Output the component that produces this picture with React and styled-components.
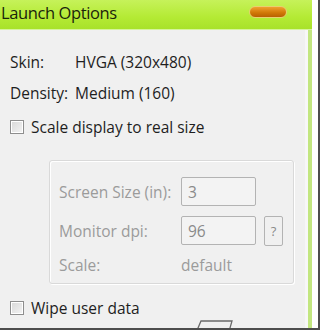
import React from 'react';
import styled, { createGlobalStyle } from 'styled-components';

const GlobalStyle = createGlobalStyle`
  html, body {
    margin: 0;
    padding: 0;
    background: #ffffff;
  }
  body {
    font-family: "Open Sans", "Noto Sans", sans-serif;
  }
`;

const Screen = styled.div`
  width: 323px;
  height: 334px;
  overflow: hidden;
  background: #ffffff;
`;

const Shadowed = styled.div`
  width: 318px;
  height: 328px;
  border-right: 2px solid #4d4d4d;
  border-bottom: 2px solid #4d4d4d;
  background: #ffffff;
  display: flex;
`;

const Window = styled.div`
  width: 312px;
  height: 328px;
  display: flex;
  flex-direction: column;
  background: #b9ec42;
  overflow: hidden;
`;

const TitleBar = styled.div`
  height: 29px;
  flex: none;
  display: flex;
  align-items: center;
  justify-content: space-between;
  padding: 0 25px 0 0;
  background: linear-gradient(180deg, #c6f25a 0%, #b4ea34 60%, #a8e22a 100%);
  border-bottom: 1px solid #d6f49c;
`;

const Title = styled.span`
  font-size: 16.5px;
  letter-spacing: -0.4px;
  color: #1a240c;
  margin-left: 1px;
  margin-top: -4px;
`;

const MinButton = styled.div`
  width: 36px;
  height: 10px;
  margin-top: -6px;
  border-radius: 6px;
  background: linear-gradient(180deg, #f0a030 0%, #d27a08 55%, #b86000 100%);
  border: 1px solid #e8d070;
`;

const Frame = styled.div`
  flex: 1;
  display: flex;
  background: #c2e680;
  padding-right: 4px;
  min-height: 0;
`;

const Body = styled.div`
  flex: 1;
  background: #f0f0f0;
  border-right: 3px solid #f7f7f7;
  padding: 16px 0 0 10px;
  display: flex;
  flex-direction: column;
  color: #1e1e1e;
  font-size: 15.5px;
  overflow: hidden;
`;

const InfoRow = styled.div`
  height: 31px;
  flex: none;
  display: flex;
  align-items: center;
`;

const InfoLabel = styled.span`
  width: 65px;
`;

const CheckRow = styled.label`
  height: 22px;
  flex: none;
  display: flex;
  align-items: center;
  gap: 7px;
  margin-top: ${(p) => p.$top || 0}px;
`;

const Box = styled.span`
  width: 12px;
  height: 12px;
  border: 1px solid #8e8e8e;
  background: linear-gradient(135deg, #d8d8d8 0%, #f4f4f4 100%);
  box-shadow: inset 0 0 0 1px #ffffff;
`;

const Group = styled.div`
  margin: 22px 0 0 39px;
  width: 245px;
  height: 124px;
  flex: none;
  box-sizing: border-box;
  border: 1px solid #d9d9d9;
  box-shadow: inset 1px 1px 0 #ffffff, 1px 1px 0 #ffffff;
  border-radius: 3px;
  padding: 16px 0 0 9px;
  display: flex;
  flex-direction: column;
  gap: 10px;
  color: #9b9b9b;
`;

const FieldRow = styled.div`
  display: flex;
  align-items: center;
  height: ${(p) => p.$h || 29}px;
  margin-top: ${(p) => p.$top || 0}px;
`;

const FieldLabel = styled.span`
  width: 122px;
`;

const Input = styled.div`
  width: 67px;
  height: 27px;
  border: 1px solid #b3b3b3;
  border-radius: 2px;
  background: #f3f3f3;
  padding-left: 6px;
  display: flex;
  align-items: center;
  color: #8a8a8a;
`;

const HelpButton = styled.div`
  width: 17px;
  height: 28px;
  margin-left: 8px;
  border: 1px solid #b3b3b3;
  border-radius: 2px;
  display: flex;
  align-items: center;
  justify-content: center;
  font-size: 13px;
  color: #8a8a8a;
`;

const Footer = styled.div`
  display: flex;
  padding-left: 183px;
  margin-top: 1px;
`;

const Sketch = () => (
  <svg width="42" height="16" viewBox="0 0 42 16">
    <polygon points="8,1 39,1 35,15 2,15" fill="none" stroke="#6a6a6a" strokeWidth="1.3" />
    <line x1="3" y1="14.5" x2="24" y2="14.5" stroke="#3a3a3a" strokeWidth="2" />
  </svg>
);

const App = () => (
  <Screen>
    <GlobalStyle />
    <Shadowed>
      <Window>
        <TitleBar>
          <Title>Launch Options</Title>
          <MinButton />
        </TitleBar>
        <Frame>
          <Body>
            <InfoRow>
              <InfoLabel>Skin:</InfoLabel>
              <span>HVGA (320x480)</span>
            </InfoRow>
            <InfoRow>
              <InfoLabel>Density:</InfoLabel>
              <span>Medium (160)</span>
            </InfoRow>
            <CheckRow $top={8}>
              <Box />
              <span>Scale display to real size</span>
            </CheckRow>
            <Group>
              <FieldRow>
                <FieldLabel>Screen Size (in):</FieldLabel>
                <Input>3</Input>
              </FieldRow>
              <FieldRow>
                <FieldLabel>Monitor dpi:</FieldLabel>
                <Input>96</Input>
                <HelpButton>?</HelpButton>
              </FieldRow>
              <FieldRow $h={22} $top={-1}>
                <FieldLabel>Scale:</FieldLabel>
                <span>default</span>
              </FieldRow>
            </Group>
            <CheckRow $top={13}>
              <Box />
              <span>Wipe user data</span>
            </CheckRow>
            <Footer>
              <Sketch />
            </Footer>
          </Body>
        </Frame>
      </Window>
    </Shadowed>
  </Screen>
);

export default App;
